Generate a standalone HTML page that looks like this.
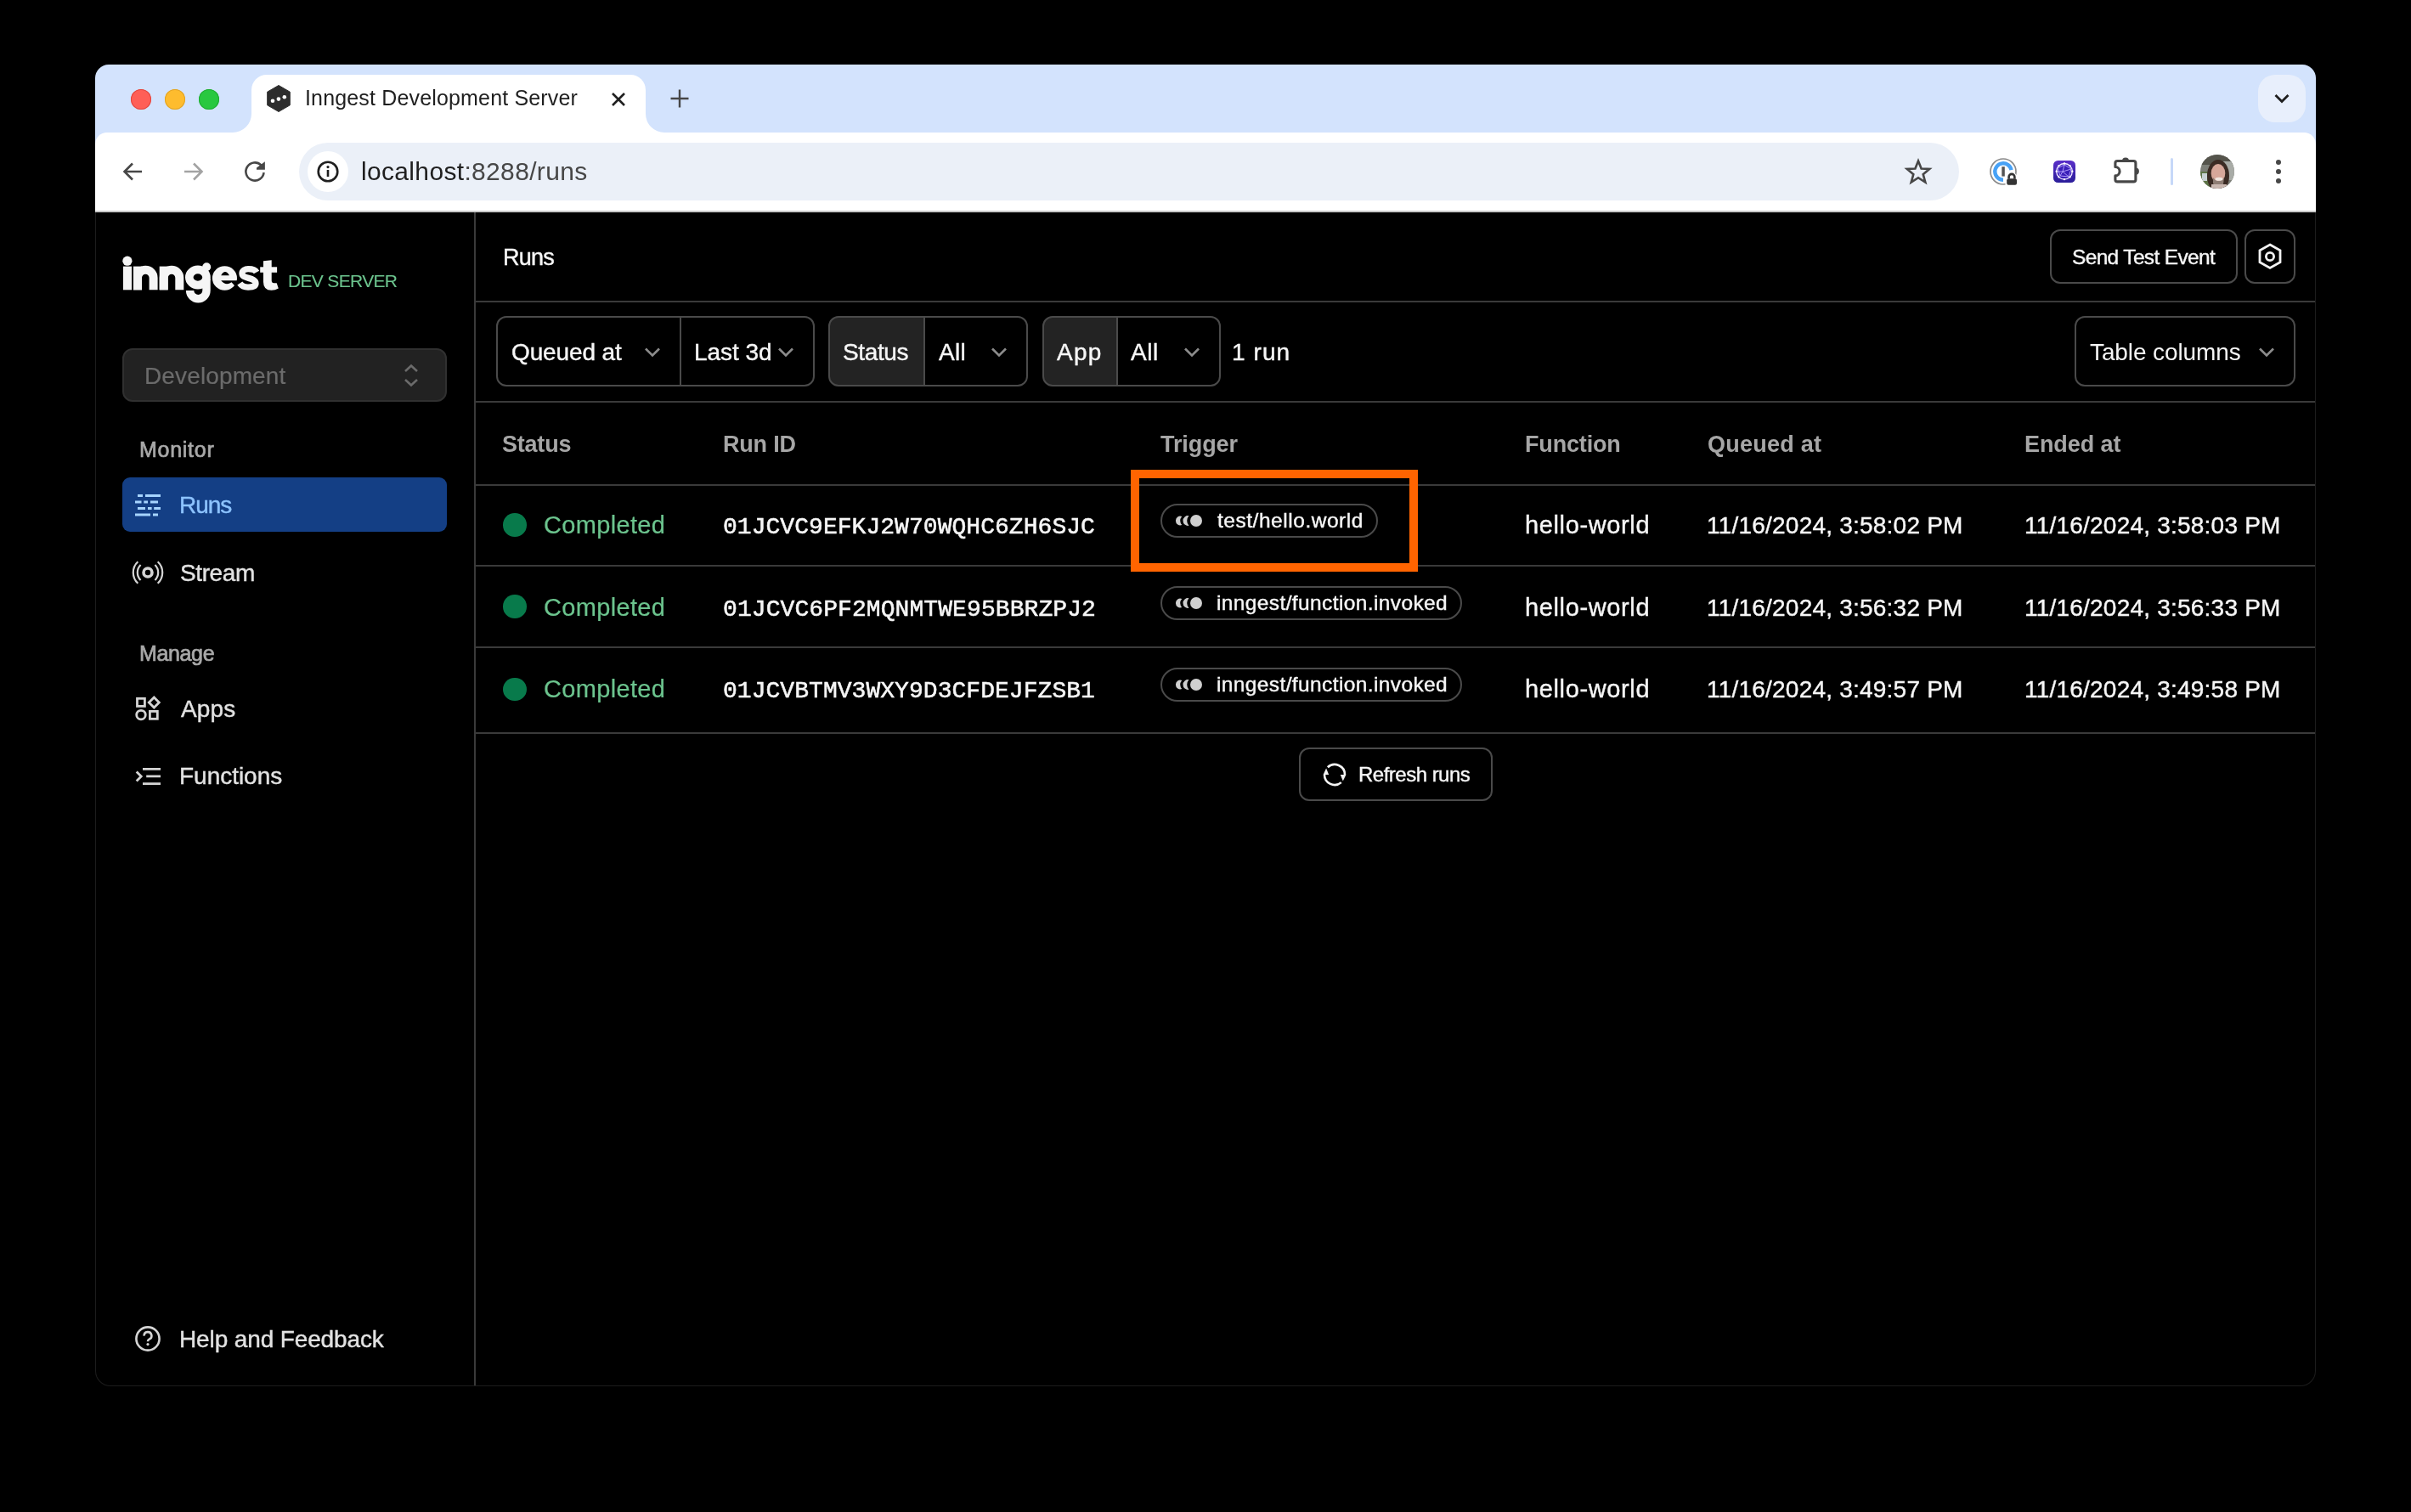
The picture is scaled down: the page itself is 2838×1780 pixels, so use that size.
<!DOCTYPE html><html><head><meta charset="utf-8"><title>Inngest Development Server</title><style>
html,body{margin:0;padding:0;background:#000;width:2838px;height:1780px;overflow:hidden;position:relative;font-family:'Liberation Sans',sans-serif}
.t{position:absolute;white-space:nowrap;will-change:transform}
svg{position:absolute;overflow:visible}
</style></head><body>
<div style="position:absolute;left:112.0px;top:76.0px;width:2614.0px;height:173.0px;background:#d3e3fd;border-radius:16px 16px 0 0"></div>
<div style="position:absolute;left:112.0px;top:156.0px;width:2614.0px;height:93.0px;background:#fff;border-radius:14px 14px 0 0"></div>
<div style="position:absolute;left:296.0px;top:88.0px;width:464.0px;height:72.0px;background:#fff;border-radius:18px 18px 0 0"></div>
<svg style="left:274px;top:134px" width="22" height="22"><path d="M0 22 A22 22 0 0 0 22 0 L22 22 Z" fill="#fff"/></svg>
<svg style="left:760px;top:134px" width="22" height="22"><path d="M22 22 A22 22 0 0 1 0 0 L0 22 Z" fill="#fff"/></svg>
<div style="position:absolute;left:154.0px;top:105.0px;width:24.0px;height:24.0px;background:#ff5f57;border-radius:50%;box-shadow:inset 0 0 0 1px #e2463f"></div>
<div style="position:absolute;left:194.0px;top:105.0px;width:24.0px;height:24.0px;background:#febc2e;border-radius:50%;box-shadow:inset 0 0 0 1px #e1a325"></div>
<div style="position:absolute;left:234.0px;top:105.0px;width:24.0px;height:24.0px;background:#28c840;border-radius:50%;box-shadow:inset 0 0 0 1px #1fad33"></div>
<svg style="left:314px;top:99.5px" width="28" height="32" viewBox="0 0 28 32"><path d="M14 0.5 L27.3 8.2 L27.3 23.8 L14 31.5 L0.7 23.8 L0.7 8.2 Z" fill="#2d2d2d" stroke="#2d2d2d" stroke-width="1" stroke-linejoin="round"/><circle cx="7" cy="18.7" r="2.3" fill="#fff"/><circle cx="13.9" cy="16.6" r="2.3" fill="#fff"/><circle cx="20.8" cy="14.3" r="2.3" fill="#fff"/></svg>
<svg style="left:719px;top:108px" width="18" height="18" viewBox="0 0 18 18"><path d="M2 2 L16 16 M16 2 L2 16" stroke="#1f1f1f" stroke-width="2.6" stroke-linecap="butt"/></svg>
<svg style="left:789px;top:105px" width="22" height="22" viewBox="0 0 22 22"><path d="M11 0.5 V21.5 M0.5 11 H21.5" stroke="#474747" stroke-width="2.4"/></svg>
<div style="position:absolute;left:2658.0px;top:88.0px;width:56.0px;height:56.0px;background:#e8effc;border-radius:20px"></div>
<svg style="left:2677px;top:110px" width="18" height="12" viewBox="0 0 18 12"><path d="M1.5 2 L9 9.5 L16.5 2" fill="none" stroke="#1f1f1f" stroke-width="2.8"/></svg>
<div style="position:absolute;left:112.0px;top:248.0px;width:2614.0px;height:1.5px;background:#c8c8c8"></div>
<svg style="left:144px;top:190px" width="24" height="24" viewBox="0 0 24 24"><path d="M23 12 H3 M12 2.5 L2.5 12 L12 21.5" fill="none" stroke="#474747" stroke-width="2.6"/></svg>
<svg style="left:216px;top:190px" width="24" height="24" viewBox="0 0 24 24"><path d="M1 12 H21 M12 2.5 L21.5 12 L12 21.5" fill="none" stroke="#a3a3a3" stroke-width="2.6"/></svg>
<svg style="left:287px;top:189px" width="26" height="26" viewBox="0 0 26 26"><path d="M20.36 5.37 A10.6 10.6 0 1 0 23.54 14.1" fill="none" stroke="#474747" stroke-width="2.6"/><path d="M15 8.4 L24.9 1.2 L24.9 10.7 L15 10.7 Z" fill="#474747"/></svg>
<div style="position:absolute;left:352.0px;top:168.0px;width:1954.0px;height:68.0px;background:#ebf0f8;border-radius:34px"></div>
<div style="position:absolute;left:362.0px;top:178.0px;width:48.0px;height:48.0px;background:#fff;border-radius:50%"></div>
<svg style="left:373px;top:189px" width="26" height="26" viewBox="0 0 26 26"><circle cx="13" cy="13" r="11.3" fill="none" stroke="#1f1f1f" stroke-width="2.6"/><rect x="11.7" y="11" width="2.6" height="8" fill="#1f1f1f"/><circle cx="13" cy="7.6" r="1.6" fill="#1f1f1f"/></svg>
<svg style="left:2242px;top:187px" width="32" height="30" viewBox="0 0 32 30"><path d="M16 2.5 L19.6 11.6 L29.2 12 L21.7 18.2 L24.3 27.6 L16 22.2 L7.7 27.6 L10.3 18.2 L2.8 12 L12.4 11.6 Z" fill="none" stroke="#474747" stroke-width="2.6" stroke-linejoin="miter"/></svg>
<svg style="left:2338px;top:182px" width="40" height="40" viewBox="0 0 40 40"><circle cx="20" cy="20" r="15" fill="none" stroke="#8a8a8a" stroke-width="1.7"/><path d="M20 29.7 A9.7 9.7 0 1 1 29.52 18.15" fill="none" stroke="#48a2f6" stroke-width="4.4"/><rect x="18.3" y="14.2" width="3.5" height="11.4" fill="#555"/><rect x="22.5" y="24" width="16" height="14" fill="#fff"/><path d="M26.6 28.5 V26.3 A3.4 3.4 0 0 1 33.4 26.3 V28.5" fill="none" stroke="#fff" stroke-width="5"/><path d="M26.6 28.5 V26.3 A3.4 3.4 0 0 1 33.4 26.3 V28.5" fill="none" stroke="#333" stroke-width="2.6"/><rect x="24.2" y="28.3" width="11.8" height="7.4" rx="2" fill="#333"/></svg>
<svg style="left:2417px;top:189px" width="26" height="26" viewBox="0 0 26 26"><defs><linearGradient id="pg" x1="0" y1="0" x2="0" y2="1"><stop offset="0" stop-color="#5a2fc9"/><stop offset="1" stop-color="#2a1d99"/></linearGradient></defs><rect x="0" y="0" width="26" height="26" rx="5.5" fill="url(#pg)"/><circle cx="13" cy="12.8" r="9.3" fill="#3a1fb8" stroke="#efe6ff" stroke-width="1.3"/><path d="M5 9 L13 5 L21 10 L18 19 L8 18 Z M13 5 L11 13 L21 10 M11 13 L8 18 M11 13 L18 19 M4 13 L11 13" fill="none" stroke="#b9a6ff" stroke-width="0.9"/><g fill="#fff"><circle cx="13" cy="3.5" r="1.2"/><circle cx="19.6" cy="6.2" r="1.1"/><circle cx="22.3" cy="12.8" r="1.2"/><circle cx="19.6" cy="19.4" r="1.1"/><circle cx="13" cy="22.1" r="1.2"/><circle cx="6.4" cy="19.4" r="1.1"/><circle cx="3.7" cy="12.8" r="1.2"/><circle cx="6.4" cy="6.2" r="1.1"/></g></svg>
<svg style="left:2482px;top:180px" width="40" height="40" viewBox="0 0 40 40" fill="#474747"><path d="M7.9 12 Q7.9 9.5 10.4 9.5 H29.4 Q31.9 9.5 31.9 12 V31.4 Q31.9 33.9 29.4 33.9 H10.4 Q7.9 33.9 7.9 31.4 V26.9 A5.2 5.2 0 0 0 7.9 16.5 Z" fill="none" stroke="#474747" stroke-width="3.1" stroke-linejoin="round"/><path d="M16 9.6 A4 4 0 0 1 24 9.6 Z"/><path d="M31.8 17.6 A4.1 4.1 0 0 1 31.8 25.8 Z"/></svg>
<div style="position:absolute;left:2555.0px;top:186.0px;width:3.0px;height:32.0px;background:#c6d8f8;border-radius:2px"></div>
<svg style="left:2590px;top:182px" width="40" height="40" viewBox="0 0 40 40"><defs><clipPath id="av"><circle cx="20" cy="20" r="20"/></clipPath></defs><g clip-path="url(#av)"><rect width="40" height="40" fill="#7d7f78"/><rect x="0" y="0" width="40" height="12" fill="#55544c"/><rect x="26" y="8" width="14" height="22" fill="#a9aca7"/><rect x="0" y="20" width="12" height="20" fill="#5d7447"/><rect x="2" y="22" width="6" height="9" fill="#c9d2d4"/><ellipse cx="21" cy="25" rx="13" ry="19" fill="#3b2b24"/><ellipse cx="21" cy="22" rx="8.3" ry="11" fill="#d6a79a"/><path d="M15 27 Q21 35 28 27 L27 35 Q21 41 15 34 Z" fill="#8e7d74"/><ellipse cx="22" cy="28.8" rx="4.6" ry="2" fill="#efe6e0"/><rect x="13" y="35" width="18" height="6" fill="#c9b7b0"/></g></svg>
<div style="position:absolute;left:2679.0px;top:188.0px;width:6.0px;height:6.0px;background:#474747;border-radius:50%"></div>
<div style="position:absolute;left:2679.0px;top:199.0px;width:6.0px;height:6.0px;background:#474747;border-radius:50%"></div>
<div style="position:absolute;left:2679.0px;top:210.0px;width:6.0px;height:6.0px;background:#474747;border-radius:50%"></div>
<div style="position:absolute;left:112.0px;top:249.5px;width:2614.0px;height:1382.5px;background:#000;border:1.3px solid #1c1c1c;border-top:none;border-radius:0 0 18px 18px;box-sizing:border-box"></div>
<div style="position:absolute;left:558.0px;top:249.5px;width:2.0px;height:1381.5px;background:#3a3a3a"></div>
<div style="position:absolute;left:560.0px;top:354.0px;width:2165.0px;height:2.0px;background:#3a3a3a"></div>
<div style="position:absolute;left:560.0px;top:472.0px;width:2165.0px;height:2.0px;background:#3a3a3a"></div>
<div style="position:absolute;left:560.0px;top:570.0px;width:2165.0px;height:2.0px;background:#3a3a3a"></div>
<div style="position:absolute;left:560.0px;top:665.0px;width:2165.0px;height:2.0px;background:#3a3a3a"></div>
<div style="position:absolute;left:560.0px;top:761.0px;width:2165.0px;height:2.0px;background:#3a3a3a"></div>
<div style="position:absolute;left:560.0px;top:862.0px;width:2165.0px;height:2.0px;background:#3a3a3a"></div>
<svg style="left:140px;top:300px" width="192" height="60" viewBox="140 300 192 60" fill="#f5f5f5"><rect x="145" y="313.6" width="10" height="27.7"/><circle cx="149.9" cy="307.2" r="5.6"/><rect x="157" y="313.6" width="10" height="27.7"/><path d="M162 341.3 V327 A9.3 9.3 0 0 1 180.6 327 V341.3" fill="none" stroke="#f5f5f5" stroke-width="10"/><rect x="187.7" y="313.6" width="10" height="27.7"/><path d="M192.7 341.3 V327 A9.3 9.3 0 0 1 211.3 327 V341.3" fill="none" stroke="#f5f5f5" stroke-width="10"/><ellipse cx="232.9" cy="326.5" rx="10.1" ry="9.1" fill="none" stroke="#f5f5f5" stroke-width="9.6"/><path d="M243 328 V342 A9.7 9.7 0 0 1 223.6 342" fill="none" stroke="#f5f5f5" stroke-width="9.4"/><circle cx="243.2" cy="314.2" r="5"/><ellipse cx="264.45" cy="327.5" rx="14.55" ry="14.3"/><path d="M260.2 324.3 Q265 315.9 269.9 324.3 Z" fill="#000"/><path d="M260.2 330.3 H285 V333.5 L278 338.3 L272.5 332.2 Q266 337 260.2 330.3 Z" fill="#000"/><path d="M302 320.5 C300 316.5 295 316.6 292 316.6 C288.5 316.6 285 318.5 285 321.8 C285 325.4 288 326.2 292.5 327.4 C297 328.6 301 329.8 301 333.6 C301 337 297 338.2 292 338.2 C287.5 338.2 284.3 336.6 282.3 333.6" fill="none" stroke="#f5f5f5" stroke-width="7.3"/><path d="M310 307.2 L319.7 306.2 V330 Q319.7 333.2 322.5 333.2 H325.7 L327.8 339.6 Q324 341.8 319.5 341.8 Q310 341.8 310 332 Z"/><rect x="306.2" y="314.3" width="19.9" height="6.5"/></svg>
<div style="position:absolute;left:144.0px;top:410.0px;width:382.0px;height:63.0px;background:#222;border:2px solid #303030;border-radius:12px;box-sizing:border-box"></div>
<svg style="left:474px;top:428px" width="20" height="28" viewBox="0 0 20 28"><path d="M3 9 L10 2.5 L17 9 M3 19 L10 25.5 L17 19" fill="none" stroke="#6b6b6b" stroke-width="2.6"/></svg>
<div style="position:absolute;left:144.0px;top:562.0px;width:382.0px;height:64.0px;background:#143f85;border-radius:9px"></div>
<svg style="left:150px;top:570px" width="50" height="50" viewBox="150 570 50 50" fill="#a6d4ff"><rect x="162" y="582" width="6" height="3"/><rect x="171" y="582" width="18" height="3"/><rect x="159" y="589.5" width="7.5" height="3"/><rect x="169.3" y="589.5" width="4.7" height="3"/><rect x="177" y="589.5" width="9" height="3"/><rect x="162" y="597" width="9" height="3"/><rect x="174" y="597" width="4.6" height="3"/><rect x="181.2" y="597" width="7.8" height="3"/><rect x="159" y="604.5" width="18" height="3"/><rect x="180" y="604.5" width="6" height="3"/></svg>
<svg style="left:150px;top:650px" width="50" height="50" viewBox="150 650 50 50" fill="none" stroke="#d4d4d4"><circle cx="174" cy="674" r="5" stroke-width="3.6"/><path d="M165.6 665 A12.6 12.6 0 0 0 165.6 683" stroke-width="2.2"/><path d="M182.4 665 A12.6 12.6 0 0 1 182.4 683" stroke-width="2.2"/><path d="M162.3 661.2 A17.6 17.6 0 0 0 162.3 686.8" stroke-width="2.2"/><path d="M185.7 661.2 A17.6 17.6 0 0 1 185.7 686.8" stroke-width="2.2"/></svg>
<svg style="left:150px;top:810px" width="50" height="50" viewBox="150 810 50 50" fill="none" stroke="#d4d4d4" stroke-width="2.8"><rect x="161.5" y="822.3" width="8.9" height="9.1"/><path d="M181.3 821 L187.3 827 L181.3 833 L175.3 827 Z"/><circle cx="166" cy="841.6" r="5.3"/><rect x="176.4" y="837.4" width="8.9" height="8.9"/></svg>
<svg style="left:150px;top:890px" width="50" height="50" viewBox="150 890 50 50" fill="none" stroke="#d4d4d4" stroke-width="2.8"><path d="M160.7 908.4 L166.2 913.9 L160.7 919.4"/><path d="M168 905.4 H189 M172.2 913.9 H189 M168 922.6 H189"/></svg>
<svg style="left:158px;top:1560px" width="32" height="32" viewBox="0 0 32 32" fill="none" stroke="#d4d4d4" stroke-width="2.6"><circle cx="16" cy="16" r="13.6"/><path d="M11.6 12.6 A4.4 4.4 0 1 1 17.6 16.6 Q16 17.3 16 19.3" stroke-width="2.6"/><circle cx="16" cy="22.6" r="1.6" fill="#d4d4d4" stroke="none"/></svg>
<div style="position:absolute;left:2413.0px;top:270.0px;width:221.0px;height:64.0px;border:2px solid #4a4a4a;border-radius:12px;box-sizing:border-box"></div>
<div style="position:absolute;left:2642.0px;top:270.0px;width:60.0px;height:64.0px;border:2px solid #4a4a4a;border-radius:12px;box-sizing:border-box"></div>
<svg style="left:2657px;top:286px" width="30" height="32" viewBox="0 0 30 32" fill="none" stroke="#f2f2f2" stroke-width="2.8"><path d="M15 2 L27 8.8 L27 22.6 L15 29.4 L3 22.6 L3 8.8 Z" stroke-linejoin="miter"/><circle cx="15" cy="16" r="4.6"/></svg>
<div style="position:absolute;left:584.0px;top:372.0px;width:375.0px;height:83.0px;border:2px solid #4a4a4a;border-radius:12px;box-sizing:border-box"></div>
<div style="position:absolute;left:800.2px;top:373.0px;width:2.0px;height:81.0px;background:#4a4a4a"></div>
<svg style="left:758.0px;top:408.5px" width="20" height="12" viewBox="0 0 20 12"><path d="M2 1.5 L10 9.5 L18 1.5" fill="none" stroke="#8c8c8c" stroke-width="2.6"/></svg>
<svg style="left:915.0px;top:408.5px" width="20" height="12" viewBox="0 0 20 12"><path d="M2 1.5 L10 9.5 L18 1.5" fill="none" stroke="#8c8c8c" stroke-width="2.6"/></svg>
<div style="position:absolute;left:975.0px;top:372.0px;width:235.0px;height:83.0px;border:2px solid #4a4a4a;border-radius:12px;box-sizing:border-box;background:linear-gradient(90deg,#232323 0,#232323 112px,#000 112px)"></div>
<div style="position:absolute;left:1086.5px;top:373.0px;width:2.0px;height:81.0px;background:#4a4a4a"></div>
<svg style="left:1166.0px;top:408.5px" width="20" height="12" viewBox="0 0 20 12"><path d="M2 1.5 L10 9.5 L18 1.5" fill="none" stroke="#8c8c8c" stroke-width="2.6"/></svg>
<div style="position:absolute;left:1226.5px;top:372.0px;width:210.0px;height:83.0px;border:2px solid #4a4a4a;border-radius:12px;box-sizing:border-box;background:linear-gradient(90deg,#232323 0,#232323 87px,#000 87px)"></div>
<div style="position:absolute;left:1313.5px;top:373.0px;width:2.0px;height:81.0px;background:#4a4a4a"></div>
<svg style="left:1393.0px;top:408.5px" width="20" height="12" viewBox="0 0 20 12"><path d="M2 1.5 L10 9.5 L18 1.5" fill="none" stroke="#8c8c8c" stroke-width="2.6"/></svg>
<div style="position:absolute;left:2442.0px;top:372.0px;width:260.0px;height:83.0px;border:2px solid #4a4a4a;border-radius:12px;box-sizing:border-box"></div>
<svg style="left:2658.0px;top:408.5px" width="20" height="12" viewBox="0 0 20 12"><path d="M2 1.5 L10 9.5 L18 1.5" fill="none" stroke="#8c8c8c" stroke-width="2.6"/></svg>
<div style="position:absolute;left:592.0px;top:604.3px;width:27.6px;height:27.6px;background:#087a4b;border-radius:50%"></div>
<div style="position:absolute;left:1366.0px;top:592.8px;width:255.8px;height:40.0px;border:2px solid #4a4a4a;border-radius:20px;box-sizing:border-box"></div>
<svg style="left:1370px;top:597.8px" width="50" height="30" viewBox="1370 598 50 30" fill="#cfcfcf"><circle cx="1408" cy="613" r="7"/><path d="M1391.2 608 A5.36 5.36 0 1 0 1391.2 618 A8 8 0 0 1 1391.2 608 Z"/><path d="M1399.4 607.15 A5.93 5.93 0 1 0 1399.4 618.85 A8.87 8.87 0 0 1 1399.4 607.15 Z"/></svg>
<div style="position:absolute;left:592.0px;top:700.4px;width:27.6px;height:27.6px;background:#087a4b;border-radius:50%"></div>
<div style="position:absolute;left:1366.0px;top:690.2px;width:355.0px;height:40.0px;border:2px solid #4a4a4a;border-radius:20px;box-sizing:border-box"></div>
<svg style="left:1370px;top:695.2px" width="50" height="30" viewBox="1370 598 50 30" fill="#cfcfcf"><circle cx="1408" cy="613" r="7"/><path d="M1391.2 608 A5.36 5.36 0 1 0 1391.2 618 A8 8 0 0 1 1391.2 608 Z"/><path d="M1399.4 607.15 A5.93 5.93 0 1 0 1399.4 618.85 A8.87 8.87 0 0 1 1399.4 607.15 Z"/></svg>
<div style="position:absolute;left:592.0px;top:797.5px;width:27.6px;height:27.6px;background:#087a4b;border-radius:50%"></div>
<div style="position:absolute;left:1366.0px;top:785.8px;width:355.0px;height:40.0px;border:2px solid #4a4a4a;border-radius:20px;box-sizing:border-box"></div>
<svg style="left:1370px;top:790.8px" width="50" height="30" viewBox="1370 598 50 30" fill="#cfcfcf"><circle cx="1408" cy="613" r="7"/><path d="M1391.2 608 A5.36 5.36 0 1 0 1391.2 618 A8 8 0 0 1 1391.2 608 Z"/><path d="M1399.4 607.15 A5.93 5.93 0 1 0 1399.4 618.85 A8.87 8.87 0 0 1 1399.4 607.15 Z"/></svg>
<div style="position:absolute;left:1331.3px;top:553.0px;width:337.3px;height:120.0px;border:10.6px solid #ff6400;box-sizing:border-box"></div>
<div style="position:absolute;left:1529.0px;top:880.0px;width:228.0px;height:63.0px;border:2px solid #4a4a4a;border-radius:12px;box-sizing:border-box"></div>
<svg style="left:1555px;top:896px" width="32" height="32" viewBox="0 0 32 32" fill="none" stroke="#f4f4f4" stroke-width="2.6"><path d="M7.82 7.22 A12 12 0 0 1 28 16"/><path d="M23.79 25.12 A12 12 0 0 1 4 16"/><path d="M22.8 16 L29.4 16 L25.8 23.6 Z" fill="#f4f4f4" stroke="none"/><path d="M9.2 16 L2.6 16 L6.1 8.6 Z" fill="#f4f4f4" stroke="none"/></svg>
<div class="t" style="left:359.00px;top:103.30px;font-family:'Liberation Sans', sans-serif;font-size:25px;line-height:25px;font-weight:400;color:#1f1f1f;letter-spacing:0.160px">Inngest Development Server</div>
<div class="t" style="left:425.00px;top:187.40px;font-family:'Liberation Sans', sans-serif;font-size:30px;line-height:30px;font-weight:400;color:#1f1f1f;letter-spacing:0.333px"><span style="color:#1f1f1f">localhost</span><span style="color:#474747">:8288/runs</span></div>
<div class="t" style="left:339.30px;top:320.00px;font-family:'Liberation Sans', sans-serif;font-size:21px;line-height:21px;font-weight:400;color:#6cc48e;letter-spacing:-0.667px;-webkit-text-stroke:0.10px currentColor">DEV SERVER</div>
<div class="t" style="left:169.70px;top:429.00px;font-family:'Liberation Sans', sans-serif;font-size:28px;line-height:28px;font-weight:400;color:#6b6b6b;letter-spacing:0.130px;-webkit-text-stroke:0.20px currentColor">Development</div>
<div class="t" style="left:163.60px;top:517.00px;font-family:'Liberation Sans', sans-serif;font-size:25px;line-height:25px;font-weight:400;color:#a8a8a8;letter-spacing:0.733px;-webkit-text-stroke:0.70px currentColor">Monitor</div>
<div class="t" style="left:211.00px;top:581.00px;font-family:'Liberation Sans', sans-serif;font-size:28px;line-height:28px;font-weight:400;color:#8dc3ff;letter-spacing:-1.033px;-webkit-text-stroke:0.40px currentColor">Runs</div>
<div class="t" style="left:212.00px;top:661.00px;font-family:'Liberation Sans', sans-serif;font-size:28px;line-height:28px;font-weight:400;color:#e2e2e2;letter-spacing:-0.400px;-webkit-text-stroke:0.40px currentColor">Stream</div>
<div class="t" style="left:163.60px;top:757.30px;font-family:'Liberation Sans', sans-serif;font-size:25px;line-height:25px;font-weight:400;color:#a8a8a8;letter-spacing:-0.360px;-webkit-text-stroke:0.70px currentColor">Manage</div>
<div class="t" style="left:213.00px;top:820.70px;font-family:'Liberation Sans', sans-serif;font-size:28px;line-height:28px;font-weight:400;color:#e2e2e2;letter-spacing:0.133px;-webkit-text-stroke:0.40px currentColor">Apps</div>
<div class="t" style="left:211.00px;top:900.40px;font-family:'Liberation Sans', sans-serif;font-size:28px;line-height:28px;font-weight:400;color:#e2e2e2;letter-spacing:-0.025px;-webkit-text-stroke:0.40px currentColor">Functions</div>
<div class="t" style="left:211.00px;top:1562.60px;font-family:'Liberation Sans', sans-serif;font-size:28px;line-height:28px;font-weight:400;color:#e2e2e2;letter-spacing:-0.125px;-webkit-text-stroke:0.40px currentColor">Help and Feedback</div>
<div class="t" style="left:591.70px;top:289.90px;font-family:'Liberation Sans', sans-serif;font-size:27px;line-height:27px;font-weight:400;color:#f6f6f6;letter-spacing:-0.767px;-webkit-text-stroke:0.40px currentColor">Runs</div>
<div class="t" style="left:2439.00px;top:290.50px;font-family:'Liberation Sans', sans-serif;font-size:24.5px;line-height:24.5px;font-weight:400;color:#f6f6f6;letter-spacing:-0.657px;-webkit-text-stroke:0.40px currentColor">Send Test Event</div>
<div class="t" style="left:601.90px;top:400.90px;font-family:'Liberation Sans', sans-serif;font-size:28px;line-height:28px;font-weight:400;color:#f6f6f6;letter-spacing:-0.138px;-webkit-text-stroke:0.40px currentColor">Queued at</div>
<div class="t" style="left:817.40px;top:401.00px;font-family:'Liberation Sans', sans-serif;font-size:28px;line-height:28px;font-weight:400;color:#f6f6f6;letter-spacing:-0.033px;-webkit-text-stroke:0.40px currentColor">Last 3d</div>
<div class="t" style="left:992.20px;top:401.30px;font-family:'Liberation Sans', sans-serif;font-size:28px;line-height:28px;font-weight:400;color:#f6f6f6;letter-spacing:-0.380px;-webkit-text-stroke:0.40px currentColor">Status</div>
<div class="t" style="left:1104.80px;top:401.30px;font-family:'Liberation Sans', sans-serif;font-size:28px;line-height:28px;font-weight:400;color:#f6f6f6;letter-spacing:0.350px;-webkit-text-stroke:0.40px currentColor">All</div>
<div class="t" style="left:1244.20px;top:401.30px;font-family:'Liberation Sans', sans-serif;font-size:28px;line-height:28px;font-weight:400;color:#f6f6f6;letter-spacing:1.300px;-webkit-text-stroke:0.40px currentColor">App</div>
<div class="t" style="left:1331.20px;top:401.30px;font-family:'Liberation Sans', sans-serif;font-size:28px;line-height:28px;font-weight:400;color:#f6f6f6;letter-spacing:0.600px;-webkit-text-stroke:0.40px currentColor">All</div>
<div class="t" style="left:1450.30px;top:401.30px;font-family:'Liberation Sans', sans-serif;font-size:28px;line-height:28px;font-weight:400;color:#f6f6f6;letter-spacing:1.075px;-webkit-text-stroke:0.40px currentColor">1 run</div>
<div class="t" style="left:2460.30px;top:400.80px;font-family:'Liberation Sans', sans-serif;font-size:28px;line-height:28px;font-weight:400;color:#f6f6f6;letter-spacing:-0.108px">Table columns</div>
<div class="t" style="left:591.40px;top:510.20px;font-family:'Liberation Sans', sans-serif;font-size:27px;line-height:27px;font-weight:700;color:#a6a6a6;letter-spacing:-0.220px">Status</div>
<div class="t" style="left:851.20px;top:510.20px;font-family:'Liberation Sans', sans-serif;font-size:27px;line-height:27px;font-weight:700;color:#a6a6a6;letter-spacing:-0.200px">Run ID</div>
<div class="t" style="left:1366.20px;top:510.20px;font-family:'Liberation Sans', sans-serif;font-size:27px;line-height:27px;font-weight:700;color:#a6a6a6;letter-spacing:-0.083px">Trigger</div>
<div class="t" style="left:1795.40px;top:510.20px;font-family:'Liberation Sans', sans-serif;font-size:27px;line-height:27px;font-weight:700;color:#a6a6a6;letter-spacing:-0.171px">Function</div>
<div class="t" style="left:2010.20px;top:510.20px;font-family:'Liberation Sans', sans-serif;font-size:27px;line-height:27px;font-weight:700;color:#a6a6a6;letter-spacing:0.237px">Queued at</div>
<div class="t" style="left:2383.20px;top:510.20px;font-family:'Liberation Sans', sans-serif;font-size:27px;line-height:27px;font-weight:700;color:#a6a6a6;letter-spacing:-0.086px">Ended at</div>
<div class="t" style="left:639.70px;top:604.00px;font-family:'Liberation Sans', sans-serif;font-size:29px;line-height:29px;font-weight:400;color:#6cc48e;letter-spacing:0.325px;-webkit-text-stroke:0.20px currentColor">Completed</div>
<div class="t" style="left:851.00px;top:607.00px;font-family:'Liberation Mono', monospace;font-size:28px;line-height:28px;font-weight:400;color:#f6f6f6;letter-spacing:0.040px;-webkit-text-stroke:0.55px currentColor">01JCVC9EFKJ2W70WQHC6ZH6SJC</div>
<div class="t" style="left:1432.70px;top:600.90px;font-family:'Liberation Sans', sans-serif;font-size:24.5px;line-height:24.5px;font-weight:400;color:#f6f6f6;letter-spacing:0.533px;-webkit-text-stroke:0.40px currentColor">test/hello.world</div>
<div class="t" style="left:1795.40px;top:604.00px;font-family:'Liberation Sans', sans-serif;font-size:29px;line-height:29px;font-weight:400;color:#f6f6f6;letter-spacing:0.630px;-webkit-text-stroke:0.40px currentColor">hello-world</div>
<div class="t" style="left:2009.20px;top:605.00px;font-family:'Liberation Sans', sans-serif;font-size:28px;line-height:28px;font-weight:400;color:#f6f6f6;letter-spacing:0.219px;-webkit-text-stroke:0.40px currentColor">11/16/2024, 3:58:02 PM</div>
<div class="t" style="left:2383.20px;top:605.00px;font-family:'Liberation Sans', sans-serif;font-size:28px;line-height:28px;font-weight:400;color:#f6f6f6;letter-spacing:0.219px;-webkit-text-stroke:0.40px currentColor">11/16/2024, 3:58:03 PM</div>
<div class="t" style="left:639.70px;top:700.60px;font-family:'Liberation Sans', sans-serif;font-size:29px;line-height:29px;font-weight:400;color:#6cc48e;letter-spacing:0.325px;-webkit-text-stroke:0.20px currentColor">Completed</div>
<div class="t" style="left:851.00px;top:703.60px;font-family:'Liberation Mono', monospace;font-size:28px;line-height:28px;font-weight:400;color:#f6f6f6;letter-spacing:0.080px;-webkit-text-stroke:0.55px currentColor">01JCVC6PF2MQNMTWE95BBRZPJ2</div>
<div class="t" style="left:1431.70px;top:697.50px;font-family:'Liberation Sans', sans-serif;font-size:24.5px;line-height:24.5px;font-weight:400;color:#f6f6f6;letter-spacing:0.383px;-webkit-text-stroke:0.40px currentColor">inngest/function.invoked</div>
<div class="t" style="left:1795.40px;top:700.60px;font-family:'Liberation Sans', sans-serif;font-size:29px;line-height:29px;font-weight:400;color:#f6f6f6;letter-spacing:0.630px;-webkit-text-stroke:0.40px currentColor">hello-world</div>
<div class="t" style="left:2009.20px;top:701.60px;font-family:'Liberation Sans', sans-serif;font-size:28px;line-height:28px;font-weight:400;color:#f6f6f6;letter-spacing:0.219px;-webkit-text-stroke:0.40px currentColor">11/16/2024, 3:56:32 PM</div>
<div class="t" style="left:2383.20px;top:701.60px;font-family:'Liberation Sans', sans-serif;font-size:28px;line-height:28px;font-weight:400;color:#f6f6f6;letter-spacing:0.219px;-webkit-text-stroke:0.40px currentColor">11/16/2024, 3:56:33 PM</div>
<div class="t" style="left:639.70px;top:797.40px;font-family:'Liberation Sans', sans-serif;font-size:29px;line-height:29px;font-weight:400;color:#6cc48e;letter-spacing:0.325px;-webkit-text-stroke:0.20px currentColor">Completed</div>
<div class="t" style="left:851.00px;top:800.40px;font-family:'Liberation Mono', monospace;font-size:28px;line-height:28px;font-weight:400;color:#f6f6f6;letter-spacing:0.040px;-webkit-text-stroke:0.55px currentColor">01JCVBTMV3WXY9D3CFDEJFZSB1</div>
<div class="t" style="left:1431.70px;top:794.00px;font-family:'Liberation Sans', sans-serif;font-size:24.5px;line-height:24.5px;font-weight:400;color:#f6f6f6;letter-spacing:0.383px;-webkit-text-stroke:0.40px currentColor">inngest/function.invoked</div>
<div class="t" style="left:1795.40px;top:797.40px;font-family:'Liberation Sans', sans-serif;font-size:29px;line-height:29px;font-weight:400;color:#f6f6f6;letter-spacing:0.630px;-webkit-text-stroke:0.40px currentColor">hello-world</div>
<div class="t" style="left:2009.20px;top:798.40px;font-family:'Liberation Sans', sans-serif;font-size:28px;line-height:28px;font-weight:400;color:#f6f6f6;letter-spacing:0.219px;-webkit-text-stroke:0.40px currentColor">11/16/2024, 3:49:57 PM</div>
<div class="t" style="left:2383.20px;top:798.40px;font-family:'Liberation Sans', sans-serif;font-size:28px;line-height:28px;font-weight:400;color:#f6f6f6;letter-spacing:0.219px;-webkit-text-stroke:0.40px currentColor">11/16/2024, 3:49:58 PM</div>
<div class="t" style="left:1598.80px;top:900.10px;font-family:'Liberation Sans', sans-serif;font-size:24px;line-height:24px;font-weight:400;color:#f6f6f6;letter-spacing:-0.509px;-webkit-text-stroke:0.40px currentColor">Refresh runs</div>
</body></html>
